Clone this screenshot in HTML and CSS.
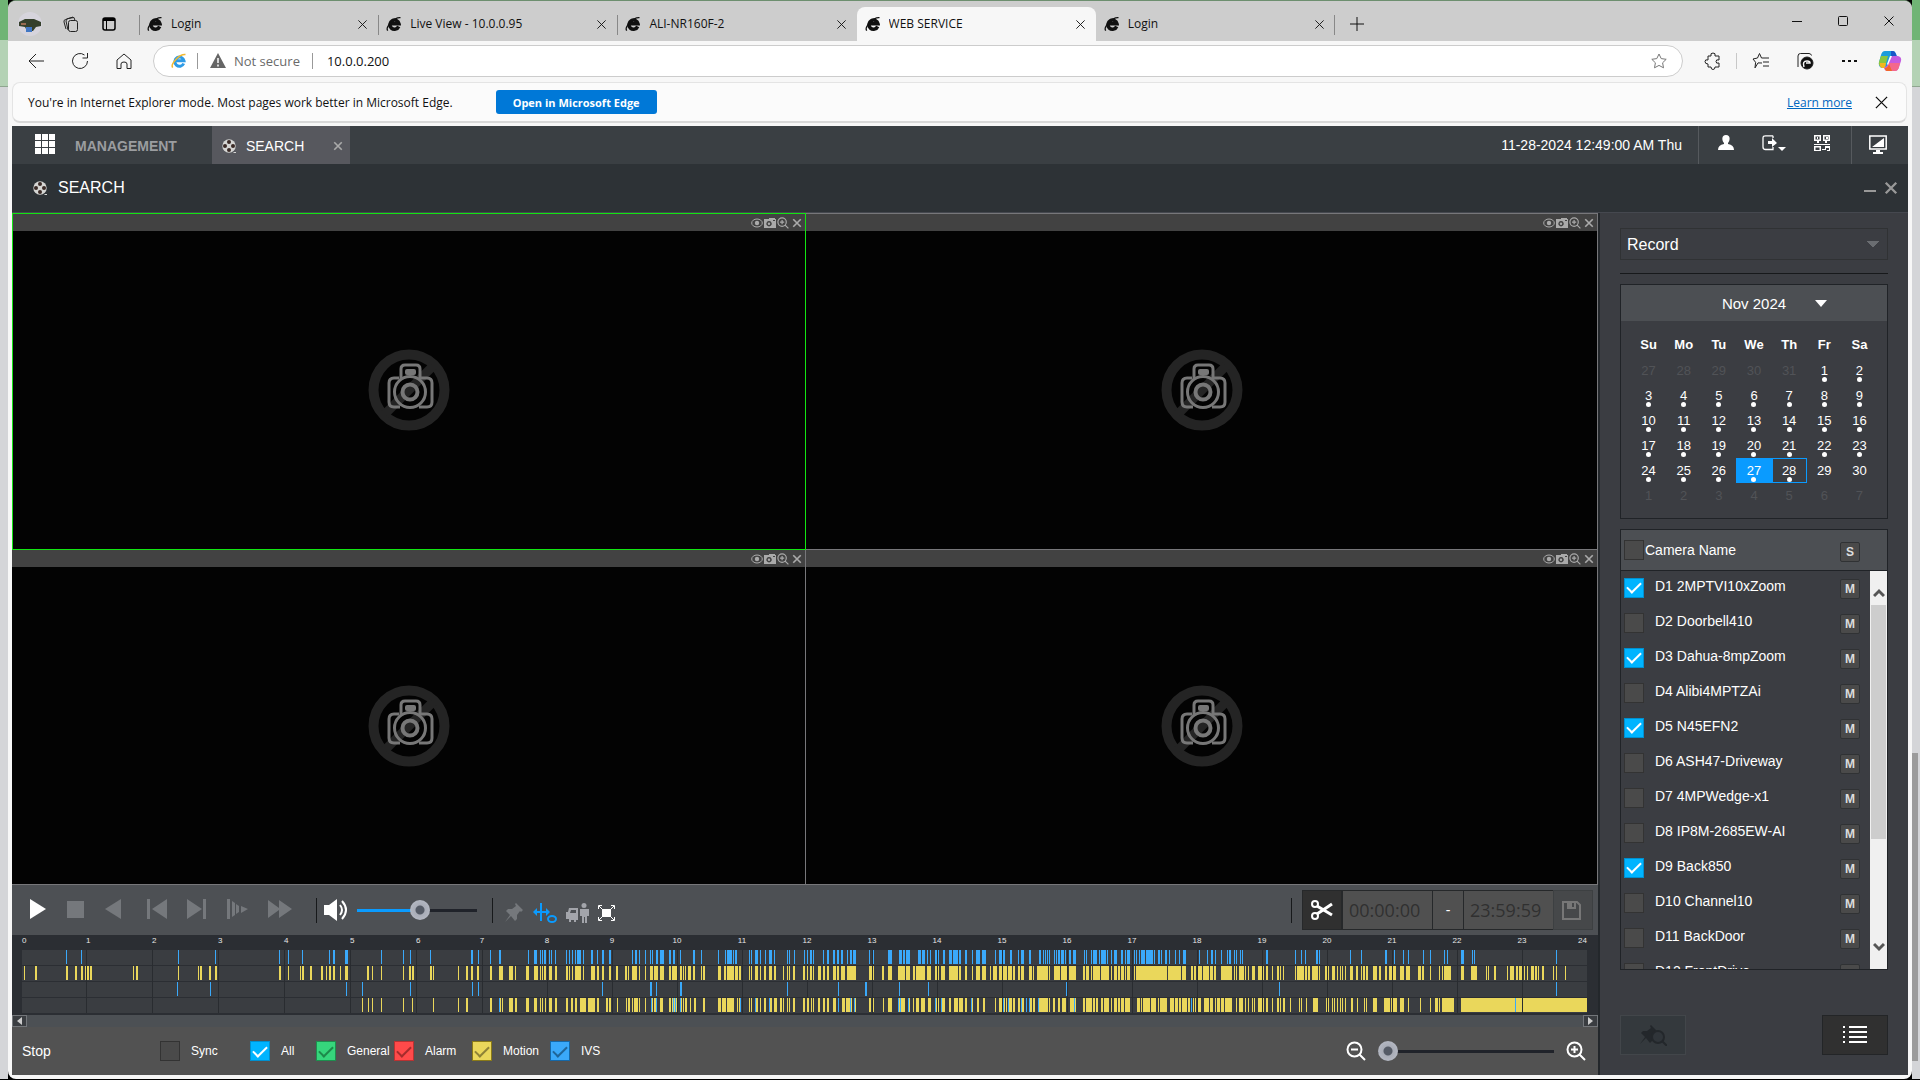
FILE: index.html
```html
<!DOCTYPE html>
<html lang="en">
<head>
<meta charset="utf-8">
<title>WEB SERVICE</title>
<link rel="stylesheet" href="styles.css">
</head>
<body>
<svg class="defs" aria-hidden="true">
  <symbol id="x" viewBox="0 0 12 12"><path d="M1.500 1.500l9 9M10.500 1.500l-9 9" fill="none" stroke="currentColor"/></symbol>
  <symbol id="ie" viewBox="0 0 16 16"><path d="M12.700 10.500A4.600 4.600 0 1 1 13 7.800H5" fill="none" stroke="currentColor" stroke-width="3.500"/><path d="M1.800 14.600C-1 11.500 8 1 14.500 1.600" fill="none" stroke="currentColor" stroke-width="1.300"/></symbol>
  <symbol id="reel" viewBox="0 0 16 16"><circle cx="8" cy="8" r="6.700" fill="#d5d5d3"/><g fill="#3a2a26"><circle cx="8" cy="4" r="2"/><circle cx="8" cy="12" r="2"/><circle cx="4" cy="8" r="2"/><circle cx="12" cy="8" r="2"/></g><path d="M13 14h2v1h-3z" fill="#d5d5d3"/></symbol>
  <symbol id="eye" viewBox="0 0 12 12"><ellipse cx="6" cy="6" rx="5.300" ry="4" fill="none" stroke="currentColor"/><circle cx="6" cy="6" r="2.200" fill="currentColor"/></symbol>
  <symbol id="snap" viewBox="0 0 12 12"><path fill-rule="evenodd" d="M0 2h5V1h6v1h1v9H0zM5 4a2.700 2.700 0 1 0 .1 0zM9 3h2v1H9z" fill="currentColor"/><circle cx="5" cy="6.700" r="1.200" fill="currentColor"/></symbol>
  <symbol id="zoomin" viewBox="0 0 20 20"><circle cx="8.500" cy="8.500" r="7" fill="none" stroke="currentColor" stroke-width="2"/><path d="M13.500 13.500l5.500 5.500M5 8.500h7M8.500 5v7" stroke="currentColor" stroke-width="2"/></symbol>
  <symbol id="zoomout" viewBox="0 0 20 20"><circle cx="8.500" cy="8.500" r="7" fill="none" stroke="currentColor" stroke-width="2"/><path d="M13.500 13.500l5.500 5.500M5 8.500h7" stroke="currentColor" stroke-width="2"/></symbol>
  <symbol id="nocam" viewBox="0 0 82 82"><circle cx="41" cy="41" r="35.500" fill="none" stroke="#242424" stroke-width="10"/><path d="M17 65l48-48" stroke="#242424" stroke-width="9"/><g fill="none" stroke="#777" stroke-width="3"><path d="M31 29h-5q-5 0-5 5v19q0 5 5 5h6M53 29h6q5 0 5 5v19q0 5-5 5h-8"/><path d="M33 30V20q0-4 4-4h11q4 0 4 4v10"/><circle cx="42" cy="43" r="15.500"/><circle cx="42" cy="43" r="7.500" stroke-width="4"/></g><rect x="37" y="20" width="11" height="6" rx="2" fill="#777"/></symbol>
  <symbol id="pin" viewBox="0 0 20 20"><path d="M12 0l7 7-2 2-1-1-3 4v4l-2 2-4-5-6 6 5-7-4-4 2-2h4l4-3-1-2z" fill="currentColor"/></symbol>
</svg>

<div class="desktop">
  <div class="behind"></div>
  <div class="window">
    <header class="tabbar">
      <svg class="avatar" viewBox="0 0 24 24"><circle cx="12" cy="12" r="12" fill="#d6d4dc"/><path d="M1 10l6-3h9l7 3v4l-5 1-3 4H9l-2-4-6-1z" fill="#35402b"/><path d="M8 15h6v5H8z" fill="#4177c4"/><path d="M3 11h5v2H3z" fill="#9a6b50"/></svg>
      <svg class="i18" viewBox="0 0 18 18" fill="none" stroke="#222"><rect x="6.500" y="5.500" width="9" height="11" rx="2"/><path d="M4 14L2 7q-.5-2 1.500-2.500L11 2M6 15L4 6q0-2 2-2.500l6-1 1 3"/></svg>
      <svg class="i18" viewBox="0 0 18 18"><rect x="3" y="3" width="12" height="12" rx="2" fill="none" stroke="#000" stroke-width="1.500"/><path d="M3 3h12v3H3zM6 5h1v10H6z"/></svg>
      <nav class="tabs">
        <div class="tab"><svg><use href="#ie"/></svg><span>Login</span><button aria-label="Close tab"><svg><use href="#x"/></svg></button></div>
        <div class="tab"><svg><use href="#ie"/></svg><span>Live View - 10.0.0.95</span><button aria-label="Close tab"><svg><use href="#x"/></svg></button></div>
        <div class="tab"><svg><use href="#ie"/></svg><span>ALI-NR160F-2</span><button aria-label="Close tab"><svg><use href="#x"/></svg></button></div>
        <div class="tab active"><svg><use href="#ie"/></svg><span>WEB SERVICE</span><button aria-label="Close tab"><svg><use href="#x"/></svg></button></div>
        <div class="tab last"><svg><use href="#ie"/></svg><span>Login</span><button aria-label="Close tab"><svg><use href="#x"/></svg></button></div>
      </nav>
      <button class="newtab" aria-label="New tab"><svg viewBox="0 0 14 14"><path d="M7 0v14M0 7h14" stroke="#111"/></svg></button>
      <div class="winbtns">
        <button aria-label="Minimize"><svg viewBox="0 0 12 12"><path d="M1 6.500h10" stroke="#111"/></svg></button>
        <button aria-label="Maximize"><svg viewBox="0 0 12 12"><rect x="1.500" y="1.500" width="9" height="9" rx="1" fill="none" stroke="#111"/></svg></button>
        <button aria-label="Close"><svg><use href="#x"/></svg></button>
      </div>
    </header>

    <div class="toolbar">
      <div class="navs">
        <button aria-label="Back"><svg viewBox="0 0 18 18"><path d="M17 9H2M9 2L2 9l7 7" /></svg></button>
        <button aria-label="Refresh"><svg viewBox="0 0 18 18"><path d="M16.500 9a7.500 7.500 0 1 1-3-6M16.500 1v5h-5"/></svg></button>
        <button aria-label="Home"><svg viewBox="0 0 18 18"><path d="M2 8l7-6 7 6v8.500h-4V12q0-2-3-2t-3 2v4.500H2z"/></svg></button>
      </div>
      <div class="address">
        <svg class="i16" viewBox="0 0 16 16"><path d="M12.700 10.500A4.600 4.600 0 1 1 13 7.800H5" fill="none" stroke="#2e9be6" stroke-width="3"/><path d="M1.800 14.600C-1 11.500 8 1 14.500 1.600" fill="none" stroke="#f2b830" stroke-width="1.500"/></svg>
        <i></i>
        <svg class="i16" viewBox="0 0 16 16"><path d="M8 0l8 15H0z" fill="#666"/><path d="M8 5v5M8 11.500v2" stroke="#fff" stroke-width="1.500"/></svg>
        <span class="insecure">Not secure</span>
        <i></i>
        <input aria-label="Address" value="10.0.0.200">
        <svg class="i16" viewBox="0 0 16 16"><path d="M8 1l2.200 4.600 5 .7-3.600 3.500.9 5L8 12.400l-4.500 2.400.9-5L.8 6.300l5-.7z" fill="none" stroke="#777"/></svg>
      </div>
      <div class="actions">
        <button aria-label="Extensions"><svg viewBox="0 0 18 18"><path d="M4 4h3q-1-3 2-3t2 3h4v4q-3-1-3 1.500t3 1.500v4h-4q0 2.500-2 2.500T7 15H4v-3q-3 0-3-2.500T4 8z" stroke-linejoin="round"/></svg></button>
        <i></i>
        <button aria-label="Favorites"><svg viewBox="0 0 18 18"><path d="M10 11l-4-.1-3 5 .6-5.600L1 7l4.500-1L7.500 1.500 9.500 6H17M11 10h6M11 14h6"/></svg></button>
        <button aria-label="Internet Explorer mode"><svg viewBox="0 0 18 18"><path d="M2 15V4q0-2.500 2.500-2.500H13q2 0 2.500 2"/><circle cx="11" cy="11" r="6" fill="#111"/><path d="M8 15q-2-6 3-6 3 0 3 2h-4" stroke="#f7f7f7" stroke-width="1.500"/></svg></button>
        <button aria-label="Settings"><svg viewBox="0 0 18 18"><path d="M2 8h3v2H2zM8 8h3v2H8zM14 8h3v2h-3z" fill="#111" stroke="none"/></svg></button>
        <button class="copilot" aria-label="Copilot"><svg viewBox="0 0 24 24"><g stroke="none"><path d="M7 2h8q2 0 3 3l1 3h-4q-2 0-3 3l-2 6q-1 2-3 2H4q-4-1-3-6L3 6q1-4 4-4z" fill="#1c9cdc"/><path d="M3 7h7l-3 11H4q-4-1-3-5z" fill="#8ac63f"/><path d="M2 14h6l-1 5H4q-3-1-2-5z" fill="#f3b71e"/><path d="M13 2h2q2 0 3 3l1 3h-6z" fill="#1a56c8"/><path d="M17 22H9q-2 0-3-3l1-1q2 0 3-3l2-6q1-2 3-2h5q4 1 3 5l-2 6q-1 4-4 4z" fill="#c45ce0"/><path d="M11 14h11l-1 4q-1 4-4 4H9q-2 0-3-3 3 1 5-5z" fill="#f4688c"/><path d="M7 19q3 0 4-4l3 7H9q-2 0-2-3z" fill="#f2662a"/><path d="M14 7l-4 9-1-1 3-8z" fill="#fff"/></g></svg></button>
      </div>
    </div>

    <div class="infobar">
      <span>You're in Internet Explorer mode. Most pages work better in Microsoft Edge.</span>
      <button class="open">Open in Microsoft Edge</button>
      <a href="#">Learn more</a>
      <button class="dismiss" aria-label="Dismiss"><svg><use href="#x"/></svg></button>
    </div>

    <main class="app">
      <div class="menu">
        <svg class="grid" viewBox="0 0 20 20"><path fill="#fff" d="M0 0h6v6H0zM7 0h6v6H7zM14 0h6v6h-6zM0 7h6v6H0zM7 7h6v6H7zM14 7h6v6h-6zM0 14h6v6H0zM7 14h6v6H7zM14 14h6v6h-6z"/></svg>
        <a class="mgmt" href="#">MANAGEMENT</a>
        <div class="pagetab"><svg class="i16"><use href="#reel"/></svg><span>SEARCH</span><button aria-label="Close SEARCH"><svg><use href="#x"/></svg></button></div>
        <time>11-28-2024 12:49:00 AM Thu</time>
        <div class="sys">
          <button aria-label="User"><svg viewBox="0 0 16 16"><path d="M8 0c5 0 4 6 2 8v1q6 1 6 6H0q0-5 6-6V8C4 6 3 0 8 0z"/></svg></button>
          <button aria-label="Log out"><svg class="w24" viewBox="0 0 24 16"><path d="M11 .8H3.500Q1 .8 1 3v9q0 2.500 2.500 2.500H11V12M11 .8V3" fill="none" stroke="#fff" stroke-width="1.300"/><path d="M6 6h4V3l5 5-5 4V9H6zM16 12h8l-4 4z"/></svg></button>
          <button aria-label="QR code"><svg viewBox="0 0 16 16"><path fill-rule="evenodd" d="M0 0h7v6H5v2H3V6H0zM1.500 1.500v3h4v-3zM3 2h1v2H3zM9 0h7v6h-3v2h-2V6H9zM10.500 1.500v3h4v-3zM12 2h2v2h-2zM0 11h7v5H0zM1.500 12.500V15h4v-2.500zM11 11h5v5h-3v-1h2v-2h-3v2H8v-1h3zM0 9h16v1H0z"/></svg></button>
        </div>
        <div class="sys"><button aria-label="Display"><svg class="w18" viewBox="0 0 18 20"><path d="M.8 1h16.400v13H.8z" fill="none" stroke="#fff" stroke-width="1.500"/><path d="M15 3v9H3zM7 15h4v2h3v2H4v-2h3z"/></svg></button></div>
      </div>

      <div class="heading">
        <svg class="i16"><use href="#reel"/></svg>
        <h1>SEARCH</h1>
        <button aria-label="Minimize page"><svg viewBox="0 0 12 12"><path d="M0 9h12" stroke="#999" stroke-width="2"/></svg></button>
        <button aria-label="Close page"><svg class="big"><use href="#x"/></svg></button>
      </div>

      <div class="columns">
        <section class="player">
          <div class="views">
            <div class="view selected"><div class="strip"><svg><use href="#eye"/></svg><svg><use href="#snap"/></svg><svg><use href="#zoomin"/></svg><svg class="cl"><use href="#x"/></svg></div><div class="feed"><svg><use href="#nocam"/></svg></div></div>
            <div class="view"><div class="strip"><svg><use href="#eye"/></svg><svg><use href="#snap"/></svg><svg><use href="#zoomin"/></svg><svg class="cl"><use href="#x"/></svg></div><div class="feed"><svg><use href="#nocam"/></svg></div></div>
            <div class="view"><div class="strip"><svg><use href="#eye"/></svg><svg><use href="#snap"/></svg><svg><use href="#zoomin"/></svg><svg class="cl"><use href="#x"/></svg></div><div class="feed"><svg><use href="#nocam"/></svg></div></div>
            <div class="view"><div class="strip"><svg><use href="#eye"/></svg><svg><use href="#snap"/></svg><svg><use href="#zoomin"/></svg><svg class="cl"><use href="#x"/></svg></div><div class="feed"><svg><use href="#nocam"/></svg></div></div>
          </div>

          <div class="controls">
            <div class="group playback">
              <button class="on" aria-label="Play"><svg width="16" height="20"><path d="M0 0l16 10L0 20z"/></svg></button>
              <button aria-label="Stop"><svg width="17" height="17"><path d="M0 0h17v17H0z"/></svg></button>
              <button aria-label="Reverse"><svg width="16" height="20"><path d="M16 0L0 10l16 10z"/></svg></button>
            </div>
            <div class="group steps">
              <button aria-label="Previous"><svg width="20" height="20"><path d="M0 0h3v20H0zM20 0L5 10l15 10z"/></svg></button>
              <button aria-label="Next"><svg width="20" height="20"><path d="M16 0h3v20h-3zM0 0l15 10L0 20z"/></svg></button>
              <button aria-label="Slow"><svg width="21" height="20"><path d="M0 0h3v20H0zM5 2l3 2v12l-3 2zM9 5l3 2v6l-3 2zM14 7l7 3-7 4z"/></svg></button>
              <button aria-label="Fast"><svg width="24" height="18"><path d="M0 0l11 8V0l13 9-13 9v-8L0 18z"/></svg></button>
            </div>
            <div class="group sound">
              <button class="on" aria-label="Sound"><svg width="24" height="22"><path d="M0 6h5l8-6v22l-8-6H0z"/><path d="M16 6q4 5 0 10M18 2q8 9 0 18" fill="none" stroke="#fff" stroke-width="2"/></svg></button>
              <input class="volume" type="range" value="53" aria-label="Volume">
            </div>
            <div class="group tools">
              <button aria-label="Pin"><svg width="20" height="20"><use href="#pin"/></svg></button>
              <button class="blue" aria-label="Sync view"><svg width="24" height="20"><path d="M7 0h2v18H7zM0 9l4-4v3h9V5l4 4-4 4v-3H4v3z"/><ellipse cx="19" cy="16" rx="4" ry="3" fill="none" stroke="#0a9bff" stroke-width="2"/></svg></button>
              <button class="pale" aria-label="Smart search"><svg width="23" height="20"><circle cx="18" cy="2.500" r="2.500"/><path fill-rule="evenodd" d="M14 6h9v7h-2v7h-2v-6h-1v6h-2v-7h-2zM3 5h9v12h-2v2H8v-2H5v2H3v-3H0V9h2zM5 7l-1 3h6V7z"/></svg></button>
              <button class="on" aria-label="Full screen"><svg width="17" height="16"><path d="M4 4h9v8H4z"/><path d="M.5 4V.5H4M13 .5h3.500V4M16.500 12v3.500H13M4 15.500H.5V12M1 1l4 4M16 1l-4 4M1 15l4-4M16 15l-4-4" fill="none" stroke="#fff"/></svg></button>
            </div>
            <div class="clip">
              <button class="cut" aria-label="Clip"><svg width="22" height="20" viewBox="0 0 22 20" fill="none" stroke="#fff" stroke-width="2"><circle cx="4" cy="4" r="3"/><circle cx="4" cy="16" r="3"/><path d="M6 6l15 9M6 14l15-10" stroke-width="3"/></svg></button>
              <input aria-label="Clip start" value="00:00:00" disabled>
              <span>-</span>
              <input aria-label="Clip end" value="23:59:59" disabled>
              <button class="save" aria-label="Save clip"><svg width="19" height="19"><path d="M1 1h14l3 3v14H1z" fill="none" stroke="#777" stroke-width="2"/><path fill-rule="evenodd" d="M5 1h9v7H5zM10 2v4h2V2z" fill="#777"/></svg></button>
            </div>
          </div>

          <div class="timeline">
            <ol class="hours" id="hours"></ol>
            <svg class="tracks" id="tracks" viewBox="0 0 1565 63" preserveAspectRatio="none" shape-rendering="crispEdges" role="img" aria-label="Recorded events"></svg>
          </div>
          <div class="scroller"><button aria-label="Earlier"><svg width="5" height="8"><path d="M5 0v8L0 4z"/></svg></button><button aria-label="Later"><svg width="5" height="8"><path d="M0 0v8l5-4z"/></svg></button></div>

          <div class="footer">
            <span class="state">Stop</span>
            <label><input type="checkbox">Sync</label>
            <label><input type="checkbox" checked>All</label>
            <label><input class="green" type="checkbox" checked>General</label>
            <label><input class="red" type="checkbox" checked>Alarm</label>
            <label><input class="yellow" type="checkbox" checked>Motion</label>
            <label><input class="ivs" type="checkbox" checked>IVS</label>
            <div class="zoom">
              <button aria-label="Zoom out"><svg><use href="#zoomout"/></svg></button>
              <input type="range" value="0" aria-label="Timeline zoom">
              <button aria-label="Zoom in"><svg><use href="#zoomin"/></svg></button>
            </div>
          </div>
        </section>

        <aside class="side">
          <div class="source"><select aria-label="Source"><option>Record</option></select></div>
          <section class="card calendar">
            <h2><span>Nov 2024</span><svg width="12" height="7"><path d="M0 0h12L6 7z" fill="#fff"/></svg></h2>
            <table>
              <thead><tr><th>Su</th><th>Mo</th><th>Tu</th><th>We</th><th>Th</th><th>Fr</th><th>Sa</th></tr></thead>
              <tbody>
                <tr><td class="off">27</td><td class="off">28</td><td class="off">29</td><td class="off">30</td><td class="off">31</td><td class="rec">1</td><td class="rec">2</td></tr>
                <tr><td class="rec">3</td><td class="rec">4</td><td class="rec">5</td><td class="rec">6</td><td class="rec">7</td><td class="rec">8</td><td class="rec">9</td></tr>
                <tr><td class="rec">10</td><td class="rec">11</td><td class="rec">12</td><td class="rec">13</td><td class="rec">14</td><td class="rec">15</td><td class="rec">16</td></tr>
                <tr><td class="rec">17</td><td class="rec">18</td><td class="rec">19</td><td class="rec">20</td><td class="rec">21</td><td class="rec">22</td><td class="rec">23</td></tr>
                <tr><td class="rec">24</td><td class="rec">25</td><td class="rec">26</td><td class="rec picked">27</td><td class="rec today">28</td><td>29</td><td>30</td></tr>
                <tr><td class="off">1</td><td class="off">2</td><td class="off">3</td><td class="off">4</td><td class="off">5</td><td class="off">6</td><td class="off">7</td></tr>
              </tbody>
            </table>
          </section>
          <section class="card cameras">
            <div class="camhead"><label><input type="checkbox">Camera Name</label><button>S</button></div>
            <div class="cambody">
              <ul>
                <li><label><input type="checkbox" checked><span>D1 2MPTVI10xZoom</span></label><button>M</button></li>
                <li><label><input type="checkbox"><span>D2 Doorbell410</span></label><button>M</button></li>
                <li><label><input type="checkbox" checked><span>D3 Dahua-8mpZoom</span></label><button>M</button></li>
                <li><label><input type="checkbox"><span>D4 Alibi4MPTZAi</span></label><button>M</button></li>
                <li><label><input type="checkbox" checked><span>D5 N45EFN2</span></label><button>M</button></li>
                <li><label><input type="checkbox"><span>D6 ASH47-Driveway</span></label><button>M</button></li>
                <li><label><input type="checkbox"><span>D7 4MPWedge-x1</span></label><button>M</button></li>
                <li><label><input type="checkbox"><span>D8 IP8M-2685EW-AI</span></label><button>M</button></li>
                <li><label><input type="checkbox" checked><span>D9 Back850</span></label><button>M</button></li>
                <li><label><input type="checkbox"><span>D10 Channel10</span></label><button>M</button></li>
                <li><label><input type="checkbox"><span>D11 BackDoor</span></label><button>M</button></li>
                <li><label><input type="checkbox"><span>D12 FrontDrive</span></label><button>M</button></li>
              </ul>
              <div class="bar">
                <svg width="12" height="10"><path d="M1 8l5-5 5 5" fill="none" stroke="#555" stroke-width="3"/></svg>
                <div class="thumb"></div>
                <svg width="12" height="10"><path d="M1 2l5 5 5-5" fill="none" stroke="#555" stroke-width="3"/></svg>
              </div>
            </div>
          </section>
          <div class="sidebtns">
            <button class="dim" aria-label="Marked records"><svg width="28" height="22"><g transform="translate(0 1)"><use href="#pin" width="20" height="20"/></g><circle cx="19" cy="13" r="6" fill="#30353a" stroke="#23272b" stroke-width="2"/><path d="M23 17l5 5" stroke="#23272b" stroke-width="2"/></svg></button>
            <button aria-label="File list"><svg width="24" height="18"><path fill="#fff" d="M0 0h2v2H0zM6 0h18v2H6zM0 5h2v2H0zM6 5h18v2H6zM0 10h2v2H0zM6 10h18v2H6zM0 15h2v2H0zM6 15h18v2H6z"/></svg></button>
          </div>
        </aside>
      </div>
    </main>
  </div>
  <div class="behind right"><div class="track"></div></div>
</div>
<script src="script.js"></script>
</body>
</html>
```

FILE: styles.css
```css
* { box-sizing: border-box; }
body {
  margin: 0;
  background: #000;
  font-family: "Liberation Sans", Arial, sans-serif;
  color: #fff;
}
button {
  border: 0;
  padding: 0;
  background: none;
  color: inherit;
  font: inherit;
  display: flex;
  align-items: center;
  justify-content: center;
}
svg { display: block; flex: none; }
ol, ul { list-style: none; margin: 0; padding: 0; }
.defs { position: absolute; width: 0; height: 0; }
.i16 { width: 16px; height: 16px; }
.i18 { width: 18px; height: 18px; }

.desktop {
  display: grid;
  grid-template-columns: 8px minmax(0, 1fr) 8px;
  min-height: 100vh;
  padding-bottom: 1px;
}
.behind {
  background: linear-gradient(#70b475 40px, #b4d2b5 40px, #b4d2b5 86px, #8fa690 86px, #8fa690 87px, #d4d5d8 87px);
}
.behind.right { display: flex; flex-direction: column; justify-content: flex-end; padding: 0 2px 18px 0; }
.track { height: 308px; background: #9b9b9b; }

.window {
  display: flex;
  flex-direction: column;
  background: #f7f7f7;
  border-top: 1px solid #6d8f6f;
  border-radius: 8px;
  overflow: hidden;
  padding-bottom: 4px;
  font-family: "Open Sans", "Noto Sans", sans-serif;
  color: #111;
}

/* Browser chrome */
.tabbar {
  display: flex;
  align-items: center;
  height: 40px;
  padding-left: 10px;
  gap: 20px;
  background: #cdcdcd;
}
.avatar { width: 24px; height: 24px; margin-top: 6px; }
.tabbar .i18 { margin-top: 6px; }
.tabs { display: flex; align-self: stretch; flex: 0 1 1196px; min-width: 0; margin: 0 -5px 0 1px; }
.tab {
  display: flex;
  align-items: center;
  flex: 1 1 0;
  min-width: 0;
  margin-top: 6px;
  padding: 0 10px 0 8px;
  gap: 8px;
  font-size: 12px;
  line-height: 16px;
  background: linear-gradient(#888, #888) 0 8px / 1px 20px no-repeat;
}
.tab svg { width: 16px; height: 16px; }
.tab span { flex: 1; white-space: nowrap; overflow: hidden; }
.tab button svg { width: 11px; height: 11px; }
.tab.active { background: #f7f7f7; border-radius: 8px 8px 0 0; }
.tab.last { background: linear-gradient(#888, #888) 100% 8px / 1px 20px no-repeat; }
.newtab { margin-top: 6px; }
.newtab svg { width: 14px; height: 14px; }
.winbtns { display: flex; margin-left: auto; }
.winbtns button { width: 46px; height: 40px; }
.winbtns svg { width: 12px; height: 12px; }

.toolbar { display: flex; align-items: center; height: 41px; padding: 0 3px 2px 0; }
.toolbar svg { stroke: #222; fill: none; width: 18px; height: 18px; }
.navs { display: flex; padding: 0 7px 0 6px; }
.navs button { width: 44px; height: 32px; }
.address {
  flex: 1;
  display: flex;
  align-items: center;
  height: 32px;
  border: 1px solid #ccc;
  border-radius: 16px;
  background: #fff;
  padding: 0 15px 0 17px;
  font-size: 13px;
}
.address svg { stroke: none; width: 16px; height: 16px; }
.address i { width: 1px; height: 16px; background: #999; margin: 0 12px 0 10px; }
.address input { flex: 1; min-width: 0; border: 0; outline: 0; font: inherit; color: #111; padding: 0 2px; }
.insecure { color: #6a6a6a; padding: 0 2px 0 8px; }
.actions { display: flex; align-items: center; padding-left: 8px; }
.actions button { width: 44px; height: 32px; }
.actions i { width: 1px; height: 16px; background: #c8c8c8; margin: 0 2px 0 1px; }
.actions .copilot { width: 38px; }
.actions .copilot svg { width: 24px; height: 24px; }

.infobar {
  display: flex;
  align-items: center;
  height: 41px;
  margin: 0 5px 3px 4px;
  padding: 0 17px 0 15px;
  border: 1px solid #e4e4e4;
  border-bottom: 2px solid #d8d8d8;
  border-radius: 8px;
  background: #fbfbfb;
  font-size: 12px;
}
.infobar .open { height: 24px; width: 161px; margin-left: 43px; border-radius: 3px; background: #0078d7; color: #fff; font-weight: 700; font-size: 11px; }
.infobar a { margin-left: auto; margin-right: 22px; color: #0067c0; }
.infobar .dismiss svg { width: 15px; height: 15px; }

/* Recorder application */
.app {
  flex: 1;
  display: flex;
  flex-direction: column;
  margin: 0 4px;
  background: #2d3236;
  color: #fff;
  font-family: "Liberation Sans", Arial, sans-serif;
  font-size: 14px;
}
.menu { display: flex; align-items: center; height: 38px; background: #3a3f43; padding-left: 23px; }
.grid { width: 20px; height: 20px; margin-bottom: 2px; }
.mgmt { margin: 2px 35px 0 20px; color: #9b9da0; font-weight: 700; text-decoration: none; }
.pagetab { display: flex; align-items: center; width: 138px; height: 38px; padding: 2px 7px 0 9px; gap: 9px; background: #57585e; }
.pagetab button { margin-left: auto; color: #aaa; }
.pagetab button svg { width: 10px; height: 10px; stroke-width: 2; }
.menu time { margin: 0 16px 0 auto; }
.sys { display: flex; align-items: center; height: 38px; padding: 0 21px 4px 19px; gap: 28px; border-left: 1px solid #565a5e; }
.sys:last-child { padding: 0 21px 0 17px; }
.sys svg { width: 16px; height: 16px; fill: #fff; }
.sys .w24 { width: 24px; }
.sys .w18 { width: 18px; height: 20px; }

.heading { display: flex; align-items: center; height: 49px; padding: 0 10px 0 20px; gap: 8px; border-bottom: 1px solid #45484f; color: #999; }
.heading h1 { flex: 1; margin: 0 0 0 2px; font-size: 16px; font-weight: 400; color: #fff; }
.heading button svg { width: 12px; height: 12px; }
.heading button .big { width: 14px; height: 14px; stroke-width: 2; }

.columns { flex: 1; display: flex; }
.player { flex: 1; min-width: 0; display: flex; flex-direction: column; padding-right: 2px; background: #23272b; }
.views { flex: 1; display: grid; grid-template: calc(50% + 1px) 1fr / calc(50% + 1px) 1fr; background: #030303; }
.view { display: flex; flex-direction: column; border: 1px solid #77777a; border-left-width: 0; }
.view:nth-child(n+3) { border-top: 0; }
.view.selected { border: 1px solid #12e512; }
.strip { display: flex; justify-content: flex-end; align-items: center; height: 17px; padding-right: 3px; gap: 1px; background: #424242; color: #aaa; }
.strip svg { width: 12px; height: 12px; }
.strip .cl { width: 10px; height: 10px; margin-left: 2px; stroke-width: 2; }
.feed { flex: 1; display: grid; place-items: center; min-height: 100px; }
.feed svg { width: 82px; height: 82px; }

.controls { display: flex; align-items: center; height: 50px; padding: 0 5px 0 18px; background: #4d5054; }
.group { display: flex; align-items: center; }
.group button { color: #75787c; }
.group button svg { fill: currentColor; }
.group .on { color: #fff; }
.group .blue { color: #0a9bff; }
.group .pale { color: #a3a5ab; }
.playback { gap: 21px; padding-bottom: 2px; }
.steps { gap: 20px; margin-left: 26px; padding-bottom: 2px; }
.sound { gap: 9px; height: 25px; margin-left: 24px; padding-left: 7px; border-left: 1px solid #17191b; }
.tools { gap: 9px; height: 25px; margin-left: 15px; padding: 5px 0 0 11px; border-left: 1px solid #17191b; }
.volume { --fill: 53%; width: 120px; }

input[type="range"] {
  appearance: none;
  height: 20px;
  margin: 0;
  background: linear-gradient(90deg, #0a9bff var(--fill, 0%), #20232a var(--fill, 0%)) center / 100% 3px no-repeat;
}
input[type="range"]::-webkit-slider-thumb {
  appearance: none;
  width: 20px;
  height: 20px;
  border-radius: 50%;
  background: radial-gradient(circle, #555b66 4px, #a9adb7 5px, #b4b8c2 10px);
}

.clip { display: flex; align-items: center; height: 25px; margin-left: auto; padding-left: 10px; border-left: 1px solid #17191b; }
.clip > * { height: 40px; border: 1px solid #26282a; }
.clip input { width: 90px; border-right: 0; padding: 0 6px; background: #505050; color: #303030; font: 18px "Open Sans", "Noto Sans", sans-serif; }
.clip span { width: 31px; border-right: 0; background: #505050; line-height: 38px; text-align: center; }
.clip .cut { width: 40px; background: #303030; }
.clip .save { width: 40px; padding-right: 3px; background: #46484a; border-color: #3d4042; }

.timeline { height: 80px; padding: 1px 11px 0 10px; background: #2b2e33; }
.hours { display: grid; grid-template-columns: 64fr repeat(6, 66fr) repeat(17, 65fr) 0; height: 14px; font-size: 8px; line-height: 9px; color: #e6e6e6; }
.hours li { grid-row: 1; width: 0; display: flex; justify-content: center; }
.hours li:nth-child(-n+7) { justify-content: flex-start; }
.hours li:last-child { justify-content: flex-end; }
.tracks { width: 100%; height: 63px; }
.scroller { display: flex; justify-content: space-between; height: 12px; background: #4c5054; }
.scroller button { width: 15px; height: 12px; border: 1px solid #73767a; background: #3a3d41; }
.scroller svg { fill: #ccc; }

.footer { display: grid; grid-template-columns: 138px 90px 66px 78px 78px 78px auto 1fr; align-items: center; height: 48px; padding: 0 12px 0 10px; background: #525252; font-size: 12px; }
.footer label { display: flex; align-items: center; gap: 11px; white-space: nowrap; }
.state { font-size: 14px; }
.zoom { display: flex; align-items: center; justify-self: end; gap: 12px; }
.zoom input { width: 176px; }
.zoom svg { width: 20px; height: 20px; }

input[type="checkbox"] {
  appearance: none;
  flex: none;
  width: 20px;
  height: 20px;
  margin: 0;
  border: 1px solid #333;
  background: #4a4a4a;
  color: #fff;
  display: grid;
  place-items: center;
}
input[type="checkbox"]:checked { background: #00b4ff; border-color: #0090d0; }
input[type="checkbox"]:checked::after {
  content: "";
  width: 12px;
  height: 6px;
  margin-bottom: 3px;
  border: solid currentColor;
  border-width: 0 0 2px 2px;
  transform: rotate(-45deg);
}
input.green[type="checkbox"]:checked { background: #36d67c; border-color: #1d8f4e; color: #1d8a4b; }
input.red[type="checkbox"]:checked { background: #ff4a4a; border-color: #b93232; color: #a52c2c; }
input.yellow[type="checkbox"]:checked { background: #ead75b; border-color: #8a7a18; color: #8e8237; }
input.ivs[type="checkbox"]:checked { background: #3aa9fa; border-color: #1568a8; color: #1f6599; }

/* Right-hand panel */
.side { width: 308px; display: flex; flex-direction: column; padding: 15px 20px 20px; background: #3b3d42; }
.source { padding-bottom: 13px; margin-bottom: 10px; border-bottom: 1px solid #17191b; }
select {
  appearance: none;
  display: block;
  width: 100%;
  height: 32px;
  padding: 0 6px;
  border: 1px solid #303234;
  border-radius: 0;
  background: conic-gradient(from -45deg at 50% 100%, #6a6d71 90deg, transparent 0) right 8px center / 12px 6px no-repeat;
  color: #fff;
  font: 16px "Liberation Sans", Arial, sans-serif;
}
select {
  background: conic-gradient(from -45deg at 50% 100%, transparent 90deg, transparent 0),
    linear-gradient(to bottom left, #6a6d71 50%, transparent 50%) right 14px center / 6px 7px no-repeat,
    linear-gradient(to bottom right, #6a6d71 50%, transparent 50%) right 8px center / 6px 7px no-repeat;
}
.card { border: 1px solid #202327; }
.calendar { padding-bottom: 10px; margin-bottom: 10px; }
.calendar h2 { display: grid; grid-template-columns: 1fr auto 1fr; align-items: center; gap: 29px; height: 36px; margin: 0; background: #4c4f53; font-size: 15px; font-weight: 400; }
.calendar h2 span { grid-column: 2; }
table { width: 246px; margin: 10px auto 0; border-collapse: separate; border-spacing: 0; table-layout: fixed; font-size: 13px; }
th { height: 27px; padding: 0; }
td { position: relative; height: 25px; padding: 0; text-align: center; }
.off { color: #515357; }
.rec::after { content: ""; position: absolute; left: 15px; bottom: 1px; width: 5px; height: 5px; border-radius: 50%; background: #fff; }
.picked { background: #0a9bff; }
.today { box-shadow: inset 0 0 0 1px #0a9bff; }

.camhead { display: flex; align-items: center; justify-content: space-between; height: 41px; padding: 0 27px 1px 3px; border-bottom: 1px solid #202327; background: #4c4f53; }
.camhead label { display: flex; align-items: center; gap: 1px; }
.camhead button { margin-top: 4px; }
.cameras button { width: 20px; height: 20px; border: 1px solid #303234; border-radius: 2px; background: #4a4a4a; font-size: 12px; font-weight: 700; color: #ddd; }
.cambody { display: flex; height: 398px; overflow: hidden; }
.cambody ul { flex: 1; padding: 0 10px 0 3px; }
.cambody li { display: flex; align-items: center; justify-content: space-between; height: 35px; }
.cambody label { display: flex; align-items: center; gap: 11px; padding-bottom: 2px; }
.cambody label span { padding-bottom: 4px; }
.bar { width: 17px; display: flex; flex-direction: column; align-items: center; padding: 17px 1px; background: #f0f0f0; }
.thumb { width: 15px; height: 234px; margin: 7px 0 auto; background: #cdcdcd; }

.sidebtns { display: flex; justify-content: space-between; margin-top: auto; }
.sidebtns button { width: 66px; height: 40px; border: 1px solid #232527; background: #303030; }
.sidebtns .dim { background: #34393d; border-color: #42464a; color: #23272b; }
```

FILE: script.js
```js
// Each list holds "start" or "start+length" marks; SCALE marks make one drawn unit.
const SCALE = 2.904;
const BLUE = "#3aa9fa";
const YELLOW = "#ead75b";

const rows = [
  [
    [BLUE, -64, "192,235,517,624,810,836,877,955,967+6,1002+8,1106,1170,1191,1249,1368+5,1388,1423,1449+6,1533,1551+8"],
    [BLUE, 1504, "0+4,7,12+5,26,32,44,75,84,93,102,107+12,125,148+6,166,180+6,200+6,267,276+6,287,305,319,325,337+6,348+12,375+5,386+6,407,444+6,467,517,537,543+15,560,566+6,607,613,624+9,639,653,665+9,679,717,723,738,767,777,784+6,793,822,833+6,851+6,862+6,874+6,891,900+6,909+9,955,967,1010+12,1042+9,1054+6,1063+11,1098+8,1109+9,1124,1132,1147+6,1156,1170+6,1188+8,1199+15,1217+5,1234+6,1254,1266+12,1283+12,1321,1333+9,1344+6,1365+6,1388,1397+8,1420+6,1449+6,1461,1466,1472,1478,1493,1498,1504+6"],
    [BLUE, 3014, "3+9,15,26+6,38+8,70,75,90,96+11,113,119+15,136,148,157+9,177+6,189,195+8,215,221,229,235+12,250+20,273,285+5,293,305+6,317,334,346,357+9,404,427,438+6,450,467,485,491+6,505,511,523,528,598+6,682,700,711,743+6,752,842,874,944+6,970,996,1010,1054,1074,1115,1124,1164+9,1196,1202,1440"]
  ],
  [
    [YELLOW, -64, "70,102+5,192+5,218+6,235+6,247,253+5,261+6,386,395+6,517,575,581+6,607+6,624+6,810+6,836,871,877+6,900+6,932+6,947,955+6,967+6,987,1002+8,1066+5,1080,1106,1170,1188+5,1196+6,1249+5,1257,1330,1353+6,1368+5,1385+6,1423+6,1449+12,1478+12,1495,1527+9,1551+11"],
    [YELLOW, 1504, "0,6,12+5,26+9,44+5,75+6,84,93,102+17,125,148+12,166+5,180+6,200+6,221+5,247+5,256,267+15,287,305,319+9,331+12,348+12,375+6,383+15,407+6,415,421,430+8,444+6,467,473+6,517+9,534+6,543+20,566+9,578+6,607,613,624+9,639,650+6,665+9,679+6,706,717,723,735+5,764+5,777,784+6,793,807+9,822+6,833+6,851+9,862+6,874+12,891+27,955+9,967,993+6,1010+12,1040+20,1063+11,1083+6,1092+26,1124+11,1147+6,1156,1164+12,1188+26,1217+5,1234+6,1254,1266+12,1283+12,1307,1315+12,1333+9,1344+12,1359+11,1373+6,1388+6,1397+8,1420+9,1432,1443+32,1478,1493+17"],
    [YELLOW, 3014, "3+17,26+20,67+6,75+9,90,96+20,119+23,148+3,157+9,168+6,177+9,189,195+8,215,221+90,314+37,354+12,380+6,389+6,401+11,415+18,436+9,447+6,467+32,505,511,520+14,537,546,558+8,575+12,589,598+6,616,630+6,639,648,682,688+21,711+6,720+5,732+17,752,769+6,778,790+9,804,813,819,828,842+9,859+6,874,880+6,889+5,909+11,926+6,944+6,955+9,967+9,987+12,1005+11,1040+9,1051+6,1074,1101,1109,1115+20,1164+9,1193+18,1237,1243,1260+6,1298,1307+11,1324+6,1333+9,1347,1356,1368+8,1379+6,1388,1400+5,1432,1440,1466"]
  ],
  [
    [BLUE, -64, "515,610,1005,1051,1191,1371,1388"],
    [BLUE, 1504, "180,319+6,337,407+5,717,865,944+6,1042,1127"],
    [BLUE, 3014, "17,636,1440"]
  ],
  [
    [YELLOW, -64, "1051,1069,1080,1106,1170,1196,1257,1330,1353+6,1423+6,1452,1458,1478+12,1495+6,1527+9,1551+8"],
    [YELLOW, 1504, "0,6,14,26+9,44+5,75+6,90+6,102+5,116+18,139+21,166+5,192+5,200+6,224,250,256+5,267,273+12,287,305,322+6,331+6,348+9,375+6,383+15,407+5,415,421+6,436,447+6,473+6,517+9,529+11,543+20,572,578+6,607,613,624+9,639,650+6,665+9,679+9,697+6,706,717,723,735+5,764+5,777+5,787,793,807+6,822+6,833+6,851+9,865,877+9,889+11,903,912+6,955+6,967,996,1010+12,1040+6,1048+12,1069+5,1083,1092+9,1106+12,1127+8,1147+6,1156,1164+12,1188+5,1202+12,1217+11,1234+6,1251+6,1269+6,1286+6,1321,1333+9,1344+6,1353,1359+12,1373+6,1388+6,1397+8,1420+9,1432+5,1446+29,1478,1490+5,1504+6"],
    [YELLOW, 3014, "6+11,29+17,67+6,75+18,96+6,105+5,119+6,128+14,148,157+9,168+6,177+9,189+14,224+8,235,241+20,264+15,285,290+21,319+12,334+9,346+6,354+15,372+6,386,392,401+8,418+15,436+8,450,456+9,467+9,479+20,511,520+11,537,546,558,563,575+12,589,598+6,616,630+6,639,648+5,668,694,700,714,735+14,772,778,790,796,804,813,819,828,845+6,862,883,889,909+11,941+17,961,967+12,987+12,1010,1045,1074,1089+9,1101,1109+35,1164+54,1220+122,1345+185"],
    [BLUE, -64, "1449"],
    [BLUE, 1504, "322,337,386,392,407,580,624,665,865,900,912,1040,1045,1069,1147,1164,1251,1344,1359,1397,1411,1420,1446"],
    [BLUE, 3014, "41,380,1321"]
  ]
];

const svg = document.getElementById("tracks");
function rect(x, y, w, h, fill) {
  const r = document.createElementNS("http://www.w3.org/2000/svg", "rect");
  Object.entries({ x, y, width: w, height: h, fill }).forEach(([k, v]) => r.setAttribute(k, v));
  svg.append(r);
}

rows.forEach((groups, row) => rect(0, row * 16, 1565, 15, "#3a3d41"));
for (let h = 1; h < 24; h++) rect(h < 8 ? 64 + (h - 1) * 66 : 525 + (h - 8) * 65, 0, 1, 63, "#292c30");
rows.forEach((groups, row) => groups.forEach(([color, base, list]) => {
  list.split(",").forEach(item => {
    const [start, length = 3] = item.split("+").map(Number);
    rect(Math.round((base + start) / SCALE), row * 16, Math.max(1, Math.round(length / SCALE)), 14, color);
  });
}));

const hours = document.getElementById("hours");
for (let h = 0; h <= 24; h++) {
  const li = document.createElement("li");
  li.textContent = h;
  hours.append(li);
}
```
